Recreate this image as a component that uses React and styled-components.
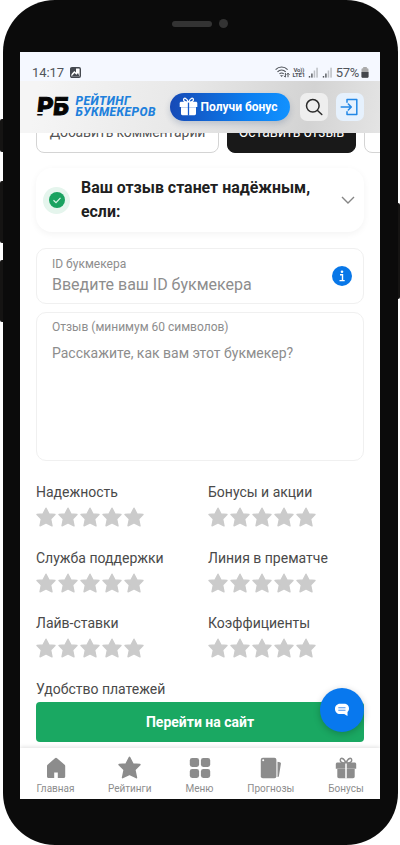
import React from "react";
import styled, { createGlobalStyle } from "styled-components";

const ratings = [
    "Надежность",
    "Бонусы и акции",
    "Служба поддержки",
    "Линия в прематче",
    "Лайв-ставки",
    "Коэффициенты",
    "Удобство платежей",
];

const STAR_PATH =
    "M10 1.200L12.900 6.900 19 7.500 14.600 12 16 18.800 10 15.800 4 18.800 5.400 12 1 7.500 7.100 6.900z";

const Star = ({ size, color }) => (
    <svg width={size} height={size} viewBox="0 0 20 20">
        <path d={STAR_PATH} fill={color} stroke={color} strokeWidth="1.400" strokeLinejoin="round" />
    </svg>
);

const HomeIcon = () => (
    <svg width="20" height="22" viewBox="0 0 20 22">
        <path
            d="M10 .8c.4 0 .7.2 1 .4l7.6 6.5c.4.4.6.8.6 1.3v10.5c0 .9-.6 1.5-1.5 1.5h-5.900V15.500H8.200V21H2.500C1.600 21 1 20.400 1 19.500V9c0-.5.200-.9.600-1.300L9 1.200c.3-.2.600-.4 1-.4z"
            fill="#8c8c8c"
        />
    </svg>
);

const MenuIcon = () => (
    <svg width="22" height="22" viewBox="0 0 22 22" fill="#8c8c8c">
        <rect x=".8" y="1" width="9.300" height="9" rx="2.400" />
        <rect x="11.900" y="1" width="9.300" height="9" rx="2.400" />
        <rect x=".8" y="12" width="9.300" height="9" rx="2.400" />
        <rect x="11.900" y="12" width="9.300" height="9" rx="2.400" />
    </svg>
);

const TipsIcon = () => (
    <svg width="22" height="22" viewBox="0 0 22 22" fill="#8c8c8c">
        <rect x=".8" y=".7" width="15.600" height="20.500" rx="2" />
        <path d="M17.500 4.800l2.400.4c.8.200 1.200.8 1 1.600l-2 12.400c-.1.600-.6.900-1.400.8z" />
        <circle cx="3.200" cy="3.200" r="1" fill="#fff" />
    </svg>
);

const GiftIcon = ({ size, color, line }) => (
    <svg width={size} height={size} viewBox="0 0 22 22">
        <path
            d="M10.800 6C9 .3 5.300.5 5.300 3.200 5.300 5 7.500 6 10.800 6zm.4 0c1.800-5.700 5.500-5.500 5.500-2.800 0 1.800-2.200 2.800-5.500 2.800z"
            fill="none"
            stroke={color}
            strokeWidth="1.500"
        />
        <path d="M2.500 5.500h17c1 0 1.700.7 1.700 1.600v4.600H.8V7.100c0-.9.700-1.600 1.700-1.600z" fill={color} />
        <path d="M2.300 12h17.400v7.500c0 1-.7 1.700-1.700 1.700H4c-1 0-1.700-.7-1.700-1.700z" fill={color} />
        <path d="M11 6.500v15" stroke={line} strokeWidth="1.500" />
    </svg>
);

const Signal = () => (
    <svg width="12" height="11" viewBox="0 0 12 11" fill="#bcbfc4">
        <rect x=".8" y="9" width="1.400" height="1.600" fill="#55595e" />
        <rect x="3.200" y="6.500" width="1.400" height="4.100" fill="#55595e" />
        <rect x="5.700" y="3.500" width="1.500" height="7.100" />
        <rect x="8.300" y=".7" width="1.500" height="9.900" />
    </svg>
);

const navItems = [
    { label: "Главная", width: 69, icon: <HomeIcon /> },
    { label: "Рейтинги", width: 79, icon: <Star size={23} color="#8c8c8c" /> },
    { label: "Меню", width: 60, icon: <MenuIcon /> },
    { label: "Прогнозы", width: 82, icon: <TipsIcon /> },
    { label: "Бонусы", width: 68, icon: <GiftIcon size={22} color="#8c8c8c" line="#fff" /> },
];

const App = () => {
    return (
        <Page>
            <GlobalStyle />
            <SideButton $side="left" $top={119} $height={33} />
            <SideButton $side="left" $top={181} $height={62} />
            <SideButton $side="left" $top={260} $height={62} />
            <SideButton $side="right" $top={203} $height={96} />
            <Phone>
                <Speaker>
                    <SpeakerBar />
                    <Camera />
                </Speaker>
                <Screen>
                    <StatusBar>
                        <Clock>14:17</Clock>
                        <svg width="11" height="11" viewBox="0 0 11 11">
                            <rect x=".7" y=".7" width="9.600" height="9.600" rx="1.200" fill="#fff" stroke="#454950" strokeWidth="1.400" />
                            <path d="M1 1h5v4.500L4.300 4 1 7.500zM1.500 9.500L4.500 6l2 1.800L8 6l1.500 3.500z" fill="#454950" />
                        </svg>
                        <StatusRight>
                            <svg width="15" height="12" viewBox="0 0 15 12" fill="none" stroke="#50545a" strokeWidth="1.200">
                                <path d="M.6 3.600c3.500-3.500 8.600-3.500 12 0M2.500 5.800c2.400-2.400 5.800-2.400 8.200 0M4.500 7.900c1.200-1.200 3-1.200 4.200 0" />
                                <path d="M5 9.300l1.600 1.700 1.600-1.700z" fill="#50545a" stroke="none" />
                                <path d="M10.400 7v4M9 9.800l1.400 1.500M13 11.200V7.300m-1.300 1.400L13 7.200l1.500 1.500" strokeWidth="1" />
                            </svg>
                            <Lte>
                                <span>Vo))</span>
                                <span>LTE1</span>
                            </Lte>
                            <Signal />
                            <Signal />
                            <Percent>57%</Percent>
                            <svg width="8" height="11" viewBox="0 0 8 11">
                                <rect x="2.200" width="3.600" height="2" fill="#aaa" />
                                <rect x=".5" y="1.300" width="7" height="9.500" rx="1.300" fill="#aaa" />
                                <path d="M.5 5h7v4.500c0 .8-.5 1.300-1.300 1.300H1.800C1 10.800.5 10.300.5 9.500z" fill="#44474c" />
                            </svg>
                        </StatusRight>
                    </StatusBar>
                    <Header>
                        <Logo>
                            <Monogram>РБ</Monogram>
                            <LogoText>
                                <span>РЕЙТИНГ</span>
                                <span>БУКМЕКЕРОВ</span>
                            </LogoText>
                        </Logo>
                        <BonusButton>
                            <GiftIcon size={19} color="#fff" line="#1259cf" />
                            Получи бонус
                        </BonusButton>
                        <IconButton $bg="#eeeeee">
                            <svg width="18" height="18" viewBox="0 0 18 18" fill="none" stroke="#2b2b2b" strokeWidth="1.500" strokeLinecap="round">
                                <circle cx="7.800" cy="7.800" r="6.300" />
                                <path d="M12.500 12.500l4.300 4" />
                            </svg>
                        </IconButton>
                        <IconButton $bg="#e6f1fd">
                            <svg width="19" height="18" viewBox="0 0 19 18" fill="none" stroke="#2287e6" strokeWidth="1.500" strokeLinecap="round" strokeLinejoin="round">
                                <path d="M7 4.300V1.500h9.800v15H7v-2.800M1.200 9h10M8.300 6l3 3-3 3" />
                            </svg>
                        </IconButton>
                    </Header>
                    <Content>
                        <Tabs>
                            <Tab $width={183}>Добавить комментарий</Tab>
                            <Tab $width={129} $active>Оставить отзыв</Tab>
                            <Tab $width={90} />
                        </Tabs>
                        <Notice>
                            <CheckHalo>
                                <svg width="16" height="16" viewBox="0 0 16 16">
                                    <circle cx="8" cy="8" r="8" fill="#1aa260" />
                                    <path d="M4.500 8.300l2.500 2.400 4.500-4.900" fill="none" stroke="#d8f5e6" strokeWidth="1.200" />
                                </svg>
                            </CheckHalo>
                            <NoticeText>Ваш отзыв станет надёжным, если:</NoticeText>
                            <svg width="14" height="9" viewBox="0 0 14 9" fill="none" stroke="#858585" strokeWidth="1.400">
                                <path d="M1 1l6 6 6-6" />
                            </svg>
                        </Notice>
                        <IdField>
                            <div>
                                <FieldLabel>ID букмекера</FieldLabel>
                                <IdPlaceholder>Введите ваш ID букмекера</IdPlaceholder>
                            </div>
                            <svg width="20" height="20" viewBox="0 0 20 20">
                                <circle cx="10" cy="10" r="10" fill="#0877e8" />
                                <circle cx="10" cy="5.800" r="1.300" fill="#fff" />
                                <path d="M8 8.700h2.500v5.600M7.500 14.600h5.200" fill="none" stroke="#fff" strokeWidth="1.400" />
                            </svg>
                        </IdField>
                        <ReviewField>
                            <FieldLabel>Отзыв (минимум 60 символов)</FieldLabel>
                            <ReviewPlaceholder>Расскажите, как вам этот букмекер?</ReviewPlaceholder>
                        </ReviewField>
                        <Ratings>
                            {ratings.map((name) => (
                                <div key={name}>
                                    <RatingName>{name}</RatingName>
                                    <Stars>
                                        {[1, 2, 3, 4, 5].map((n) => (
                                            <Star key={n} size={20} color="#cbcbcb" />
                                        ))}
                                    </Stars>
                                </div>
                            ))}
                        </Ratings>
                        <SiteButton>Перейти на сайт</SiteButton>
                        <ChatButton>
                            <svg width="16" height="14" viewBox="0 0 16 14">
                                <path d="M6 .8h4c3 0 5 2 5 4.800 0 1.600-.6 2.700-1.500 3.500v4L10.200 11H6C3 11 1 8.700 1 5.900S3 .8 6 .8z" fill="#fff" />
                                <path d="M4.300 4.800h7.200M4.300 7.200h7.200" stroke="#4b93ed" strokeWidth="1.100" />
                            </svg>
                        </ChatButton>
                    </Content>
                    <BottomNav>
                        {navItems.map((item) => (
                            <NavItem key={item.label} $width={item.width}>
                                <NavIcon>{item.icon}</NavIcon>
                                {item.label}
                            </NavItem>
                        ))}
                    </BottomNav>
                </Screen>
            </Phone>
        </Page>
    );
};

export default App;

/* ------------------------------ */
/*        STYLED COMPONENTS       */
/* ------------------------------ */
const GlobalStyle = createGlobalStyle`
  * {
    box-sizing: border-box;
  }

  body {
    margin: 0;
    background: #fff;
    font-family: Roboto, "Liberation Sans", sans-serif;
  }

  svg {
    display: block;
    flex-shrink: 0;
  }

  button {
    border: 0;
    padding: 0;
    font-family: inherit;
  }
`;

const Page = styled.div`
  position: relative;
  width: 400px;
  height: 845px;
  padding: 0 2.5px;
  overflow: hidden;
`;

const SideButton = styled.div`
  position: absolute;
  ${(p) => p.$side}: 0;
  top: ${(p) => p.$top}px;
  width: 10px;
  height: ${(p) => p.$height}px;
  border-radius: 2px;
  background: #151413;
`;

const Phone = styled.div`
  position: relative;
  height: 845px;
  padding: 0 17.500px;
  border-radius: 52px;
  background: #0b0b0b;
`;

const Speaker = styled.div`
  display: flex;
  align-items: center;
  justify-content: center;
  gap: 7px;
  height: 51.500px;
  padding: 0 0 4px 0;
`;

const SpeakerBar = styled.div`
  width: 40px;
  height: 6px;
  border-radius: 3px;
  background: #333;
`;

const Camera = styled.div`
  width: 9px;
  height: 9px;
  border-radius: 50%;
  background: #333;
`;

const Screen = styled.div`
  display: flex;
  flex-direction: column;
  height: 747px;
  overflow: hidden;
  background: #fff;
`;

const StatusBar = styled.div`
  display: flex;
  align-items: center;
  gap: 6px;
  height: 29.500px;
  padding: 12px 11px 0 12px;
  background: #f5f8ff;
  color: #50545a;
`;

const Clock = styled.span`
  font-size: 13px;
  letter-spacing: -0.1px;
`;

const StatusRight = styled.div`
  display: flex;
  align-items: center;
  gap: 2px;
  margin-left: auto;
`;

const Lte = styled.div`
  display: flex;
  flex-direction: column;
  align-items: center;
  width: 14px;
  font-size: 6px;
  font-weight: 700;
  line-height: 5.500px;
  letter-spacing: -0.2px;
`;

const Percent = styled.span`
  font-size: 13px;
  letter-spacing: -0.3px;
`;

const Header = styled.div`
  display: flex;
  align-items: center;
  height: 51.500px;
  padding: 0 15.500px;
  background: linear-gradient(100deg, #f5f5f5 5%, #e8e8e8 45%, #d3d3d3 80%, #e4e4e4);
`;

const Logo = styled.div`
  display: flex;
  align-items: center;
  gap: 6px;
  width: 134px;
`;

/* light stripes cut the stem of the first letter and the top bar of the second */
const Monogram = styled.div`
  position: relative;
  width: 34px;
  padding-left: 1px;
  color: #050505;
  font-size: 25px;
  font-weight: 900;
  line-height: 26px;
  -webkit-text-stroke: 1px #050505;
  transform: skewX(-6deg);

  &::before,
  &::after {
    content: "";
    position: absolute;
    height: 1.500px;
    background: #f2f2f2;
  }

  &::before {
    left: 0;
    bottom: 6.500px;
    width: 8px;
  }

  &::after {
    top: 7px;
    right: -1px;
    width: 15px;
  }
`;

const LogoText = styled.div`
  display: flex;
  flex-direction: column;
  color: #2080dc;
  font-size: 12px;
  font-style: italic;
  font-weight: 800;
  line-height: 11px;
  letter-spacing: 0.45px;
  white-space: nowrap;
`;

const BonusButton = styled.button`
  display: flex;
  align-items: center;
  gap: 3px;
  width: 120px;
  height: 28px;
  padding-left: 9px;
  border-radius: 14px;
  background: linear-gradient(95deg, #1649b5, #0b7ef0 65%, #1292ff);
  box-shadow: 0 3px 6px rgba(30, 60, 110, 0.2);
  color: #fff;
  font-size: 12px;
  font-weight: 700;
  white-space: nowrap;
`;

const IconButton = styled.button`
  display: flex;
  align-items: center;
  justify-content: center;
  width: 28px;
  height: 28px;
  margin-left: 10px;
  border-radius: 7px;
  background: ${(p) => p.$bg};

  & + & {
    margin-left: 8px;
  }
`;

const Content = styled.div`
  position: relative;
  flex: 1;
  min-height: 0;
  padding: 0 16px;
  overflow: hidden;
`;

const Tabs = styled.div`
  display: flex;
  gap: 8px;
  margin-top: -20px;
`;

const Tab = styled.div`
  flex-shrink: 0;
  width: ${(p) => p.$width}px;
  height: 40px;
  border: 1px solid ${(p) => (p.$active ? "#191919" : "#d4d4d4")};
  border-radius: 8px;
  background: ${(p) => (p.$active ? "#191919" : "#fff")};
  color: ${(p) => (p.$active ? "#fff" : "#555")};
  font-size: 14px;
  line-height: 37px;
  letter-spacing: ${(p) => (p.$active ? "0" : "-0.1px")};
  text-align: center;
  white-space: nowrap;
`;

const Notice = styled.div`
  display: flex;
  align-items: center;
  height: 64px;
  margin-top: 15.500px;
  padding: 0 9px 0 7px;
  border-radius: 16px;
  box-shadow: 0 2px 7px rgba(0, 0, 0, 0.05);
`;

const CheckHalo = styled.div`
  display: flex;
  align-items: center;
  justify-content: center;
  width: 27px;
  height: 27px;
  border-radius: 50%;
  background: #e5f5ed;
`;

const NoticeText = styled.div`
  flex: 1;
  margin: 0 20px 0 11px;
  color: #202020;
  font-size: 15.900px;
  font-weight: 700;
  line-height: 24px;
`;

const Field = styled.div`
  border: 1.500px solid #f0f0f0;
  border-radius: 10px;
  color: #8d8d8d;
`;

const IdField = styled(Field)`
  display: flex;
  align-items: center;
  justify-content: space-between;
  height: 56px;
  margin-top: 16px;
  padding: 0 11px 0 15px;
`;

const ReviewField = styled(Field)`
  height: 149px;
  margin-top: 8px;
  padding: 6px 15px;
`;

const FieldLabel = styled.div`
  font-size: 12px;
  line-height: 17px;
`;

const IdPlaceholder = styled.div`
  font-size: 16px;
  line-height: 24px;
`;

const ReviewPlaceholder = styled.div`
  margin-top: 6px;
  font-size: 14px;
  line-height: 22px;
`;

const Ratings = styled.div`
  display: grid;
  grid-template-columns: 172px 1fr;
  grid-auto-rows: 65.700px;
  margin-top: 21px;
`;

const RatingName = styled.div`
  color: #4a4a4a;
  font-size: 14px;
  line-height: 20px;
`;

const Stars = styled.div`
  display: flex;
  gap: 2px;
  margin-top: 5px;
`;

const SiteButton = styled.button`
  position: absolute;
  right: 16px;
  bottom: 6px;
  left: 16px;
  height: 40px;
  border-radius: 4px;
  background: #1aa862;
  color: #fff;
  font-size: 14px;
  font-weight: 700;
`;

const ChatButton = styled.button`
  position: absolute;
  right: 16px;
  bottom: 16px;
  display: flex;
  align-items: center;
  justify-content: center;
  width: 44px;
  height: 44px;
  border-radius: 50%;
  background: #0878ee;
  box-shadow: 0 2px 7px rgba(0, 0, 0, 0.22);
`;

const BottomNav = styled.div`
  position: relative;
  display: flex;
  justify-content: space-between;
  height: 51px;
  padding: 9px 0 0 1px;
  background: #fff;
  box-shadow: 0 -1px 4px rgba(0, 0, 0, 0.12);
`;

const NavItem = styled.div`
  display: flex;
  flex-direction: column;
  align-items: center;
  gap: 3px;
  width: ${(p) => p.$width}px;
  color: #8d8d8d;
  font-size: 10px;
  line-height: 13px;
`;

const NavIcon = styled.div`
  display: flex;
  align-items: center;
  height: 22px;
`;
